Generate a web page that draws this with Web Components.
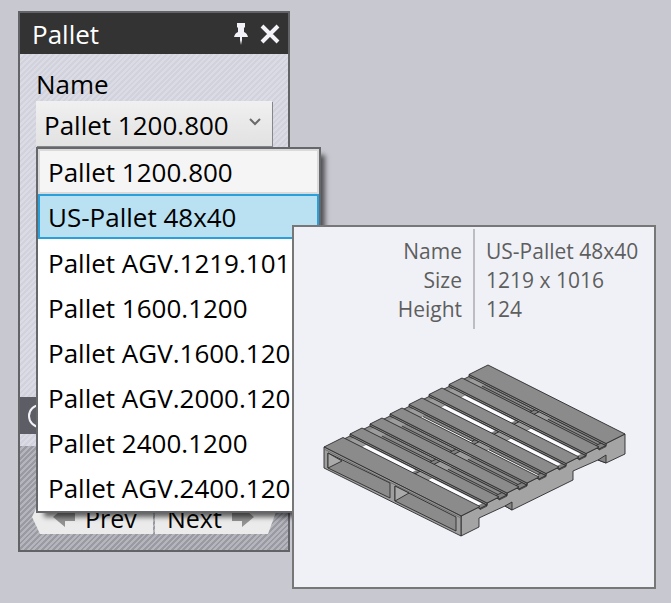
<!DOCTYPE html>
<html lang="en">
<head>
<meta charset="utf-8">
<title>Pallet</title>
<style>
  body { margin: 0; background: #c8c8d1; color: #000; font-family: "Open Sans", "Noto Sans", sans-serif; font-size: 26px; }
</style>
</head>
<body>
<pallet-stage>
  <tool-panel heading="Pallet">
    <pallet-picker label="Name" value="Pallet 1200.800"></pallet-picker>
    <round-mark slot="bar"></round-mark>
    <step-nav slot="footer"></step-nav>
  </tool-panel>
  <option-list slot="menu">
    <option-row state="current">Pallet 1200.800</option-row>
    <option-row state="hover">US-Pallet 48x40</option-row>
    <option-row>Pallet AGV.1219.101</option-row>
    <option-row>Pallet 1600.1200</option-row>
    <option-row>Pallet AGV.1600.120</option-row>
    <option-row>Pallet AGV.2000.120</option-row>
    <option-row>Pallet 2400.1200</option-row>
    <option-row>Pallet AGV.2400.120</option-row>
  </option-list>
  <info-tip slot="tip"><pallet-drawing></pallet-drawing></info-tip>
</pallet-stage>
<script>
const define = (name, html, setup) => {
  const template = document.createElement('template');
  template.innerHTML = html;
  customElements.define(name, class extends HTMLElement {
    constructor() {
      super();
      this.attachShadow({ mode: 'open' }).append(template.content.cloneNode(true));
    }
    connectedCallback() { if (setup) setup(this, this.shadowRoot); }
  });
};

define('pallet-stage', `
<style>
  :host { display: flex; box-sizing: border-box; min-height: 100vh; padding: 11px 18px 51px; position: relative; }
  slot[name=menu]::slotted(*) { position: absolute; left: 36px; top: 147px; width: 285px; }
  slot[name=tip]::slotted(*) { position: absolute; left: 292px; top: 225px; width: 364px; }
</style>
<slot></slot><slot name="menu"></slot><slot name="tip"></slot>`);

define('tool-panel', `
<style>
  :host { display: flex; flex-direction: column; flex: 0 1 272px; box-sizing: border-box; border: 2px solid #626367;
    background: repeating-linear-gradient(135deg, #d1d2dc 0 2px, #dadbe4 2px 4px); }
  header { display: flex; align-items: center; height: 41px; padding: 0 7px 0 12px; gap: 10px; background: #333; color: #fff; }
  h1 { flex: 1; margin: 0; font: inherit; line-height: 41px; padding-top: 2px; }
  button { border: 0; padding: 0; background: none; display: flex; }
  main { flex: 1; padding: 14px 15px 14px 16px; }
  .bar { height: 37px; background: #5d5e65; padding-left: 8px; display: flex; align-items: center; }
  footer { margin-top: 12px; padding: 54px 12px 16px; background: repeating-linear-gradient(135deg, #9a9ba2 0 2px, #b4b5bd 2px 4px); }
</style>
<header><h1></h1>
  <button aria-label="Pin"><svg width="16" height="24" viewBox="0 0 16 24" fill="#f2f2f8"><path d="M4 1h8v4l-1 1v4q3 1 4 5H9v3l-1 5-1-5v-3H1q1-4 4-5V6L4 5z"/></svg></button>
  <button aria-label="Close"><svg width="22" height="22" viewBox="0 0 22 22"><path d="M3 3l16 16M19 3L3 19" stroke="#f2f2f8" stroke-width="4"/></svg></button>
</header>
<main><slot></slot></main>
<div class="bar"><slot name="bar"></slot></div>
<footer><slot name="footer"></slot></footer>`,
(el, root) => { root.querySelector('h1').textContent = el.getAttribute('heading'); });

define('round-mark', `
<style>:host { display: block; } svg { display: block; }</style>
<svg width="24" height="24" viewBox="0 0 24 24"><circle cx="12" cy="12" r="11" fill="none" stroke="#f2f2f8" stroke-width="2"/></svg>`);

define('pallet-picker', `
<style>
  :host { display: block; }
  label { display: block; line-height: 33px; }
  .box { display: grid; align-items: center; background: linear-gradient(#f0f0f0, #e2e2e2); box-shadow: 1px 1px 0 #85868c; margin-right: 1px; }
  select, svg { grid-area: 1 / 1; }
  select { appearance: none; border: 0; background: none; font: inherit; color: inherit; height: 45px; padding: 2px 40px 0 8px; width: 100%; }
  svg { justify-self: end; margin: 0 11px 4px; pointer-events: none; }
</style>
<label for="s"></label>
<div class="box"><select id="s"><option></option></select>
<svg width="12" height="10" viewBox="0 0 12 10"><path d="M1 2l5 5 5-5" fill="none" stroke="#6a6a6a" stroke-width="2"/></svg></div>`,
(el, root) => {
  root.querySelector('label').textContent = el.getAttribute('label');
  root.querySelector('option').textContent = el.getAttribute('value');
});

define('option-list', `
<style>
  :host { display: block; box-sizing: border-box; padding: 0 0 2px; border: 2px solid #66676a; background: #fff; box-shadow: 6px 6px 5px -2px #0009; }
</style>
<slot></slot>`, el => { el.setAttribute('role', 'listbox'); });

define('option-row', `
<style>
  :host { display: block; }
  button { display: block; width: 100%; box-sizing: border-box; border: 2px solid transparent; background: none; padding: 1px 8px 0; font: inherit; line-height: 40px; color: inherit; text-align: left; white-space: nowrap; overflow: hidden; }
  :host([state=current]) button { background: #f5f5f5; border-color: #dadada; }
  :host([state=hover]) button { background: #b9e1f2; border-color: #2aa0da; }
  :host(:not([state])) button { padding-top: 4px; line-height: 37px; }
</style>
<button role="option"><slot></slot></button>`);

define('step-nav', `
<style>
  :host { display: grid; grid-template-columns: 1fr 1fr; gap: 2px; }
  button { min-width: 0; display: flex; align-items: center; gap: 10px; height: 34px; border: 0; padding: 3px 0 0; background: #ebebeb; font: inherit; font-size: 25px; line-height: 31px; color: inherit; }
  .prev { clip-path: polygon(8px 0, 100% 0, 100% 100%, 8px 100%, 0 50%); padding-left: 21px; }
  .next { clip-path: polygon(0 0, calc(100% - 8px) 0, 100% 35%, calc(100% - 8px) 100%, 0 100%); padding-left: 12px; }
  svg { flex: none; fill: #929292; margin-bottom: 4px; }
</style>
<button class="prev"><svg width="22" height="20" viewBox="0 0 22 20"><path d="M0 10L12 0v6h10v8H12v6z"/></svg>Prev</button>
<button class="next">Next<svg width="22" height="20" viewBox="0 0 22 20"><path d="M22 10L10 0v6H0v8h10v6z"/></svg></button>`);

define('info-tip', `
<style>
  :host { display: block; box-sizing: border-box; border: 2px solid #777; background: #f0f1f7; color: #5e5e5e; font-size: 21px; padding: 2px 12px 48px; }
  table { border-spacing: 0; width: 100%; }
  th, td { padding: 0 11px; line-height: 29px; font-weight: 400; white-space: nowrap; }
  th { text-align: right; width: 145px; }
  td { border-left: 2px solid #bdbdc1; padding-right: 0; }
  tr:first-child > * { padding-top: 8px; }
  tr:last-child > * { padding-bottom: 5px; }
</style>
<table>
  <tr><th scope="row">Name</th><td>US-Pallet 48x40</td></tr>
  <tr><th scope="row">Size</th><td>1219 x 1016</td></tr>
  <tr><th scope="row">Height</th><td>124</td></tr>
</table>
<slot></slot>`);

define('pallet-drawing', `
<style>
  :host { display: block; margin: 32px 14px 0; }
  svg { display: block; width: 100%; }
</style>
<svg viewBox="320 361 308 178" role="img" aria-label="Wooden pallet" stroke="#2b2b2b" stroke-width=".9" stroke-linejoin="round"></svg>`,
(el, root) => {
  // Deck plane: u runs along the boards (0..137), d runs across them (0..164).
  const p = (u, d, drop = 0) => `${(324 + u + d).toFixed(1)},${(447 + u * 69 / 137 - d / 2 + drop).toFixed(1)}`;
  const poly = (pts, fill, line = true) => `<polygon points="${pts.join(' ')}" fill="${fill}"${line ? '' : ' stroke="none"'}/>`;
  const boards = [[0, 19], [26, 38], [46, 58], [66, 78], [85, 98], [105, 118], [125, 138], [145, 164]];
  const strip = (a, b, u, v, drop) => [p(u, a, drop), p(u, b, drop), p(v, b, drop), p(v, a, drop)];
  // Side face; its top edge steps down between the boards.
  const top = boards.flatMap(([a, b]) => [p(137, a, 3), p(137, a), p(137, b), p(137, b, 3)]);
  let s = poly([...top, '625,454', '606,463', '598,460', '573,471', '573,480', '512,510', '505,506', '479,518', '479,527', '461,536'], '#a4a4a4');
  s += poly(['505,506', '512,502', '512,510'], '#858585') + poly(['598,460', '606,455', '606,463'], '#858585');
  const slots = { 0: 0, 3: 4, 4: 0, 5: 0 };
  boards.slice(0, -1).forEach(([, a], i) => {
    const b = boards[i + 1][0];
    s += poly(strip(a, b, 0, 137, 2), '#8b8b8b');
    // Stringers seen through the gap.
    s += poly(strip(a, b, 4, 16, 2), '#9d9d9d', false) + poly(strip(a, b, 70, 82, 2), '#9d9d9d', false) + poly(strip(a, b, 66, 70, 2), '#808080');
    if (!(i in slots)) s += `<polyline points="${p(16, a + 4, 2)} ${p(66, a + 4, 2)}" fill="none"/><polyline points="${p(82, a + 4, 2)} ${p(132, a + 4, 2)}" fill="none"/>`;
    s += poly(strip(a, b, 132, 137, 2), '#808080');
    s += poly([p(0, b), p(137, b), p(137, b, 2), p(0, b, 2)], '#8b8b8b');
    // Openings right through the deck.
    [[16, 66], [82, 132]].forEach(([u, v]) => {
      if (i in slots) s += poly(strip(a, b - slots[i] / 2, u, v, 3), '#fbfbff', false);
      if (i === 3) s += `<polyline points="${p(u, b - 2, 3)} ${p(v, b - 2, 3)}" fill="none"/>`;
    });
  });
  boards.forEach(([a, b]) => { s += poly([p(0, a), p(0, b), p(137, b), p(137, a)], '#8b8b8b'); });
  s += poly(['324,447', '461,516', '461,536', '324,468'], '#9e9e9e');
  s += '<path d="M324 449L461 518" fill="none" stroke="#6a6a6a"/>';
  [['328,453', '390,483', '390,498', '328,468', '342,461'], ['395,486', '456,517', '456,531', '395,501', '409,493']].forEach(([a, b, c, d, e]) => {
    s += poly([a, b, c, d], '#8b8b8b') + poly([a, e, d], '#aaaaaa');
  });
  root.querySelector('svg').innerHTML = s;
});
</script>
</body>
</html>
